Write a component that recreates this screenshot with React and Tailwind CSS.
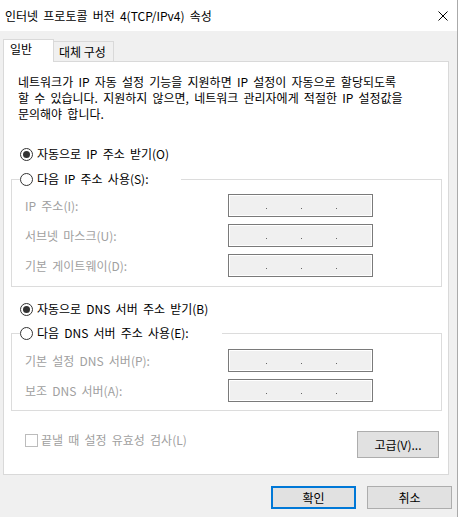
import React from "react";

function Radio({ checked }) {
  return (
    <span className="w-[13px] h-[13px] rounded-full border border-[#333333] bg-white flex items-center justify-center shrink-0">
      {checked && <span className="w-[7px] h-[7px] rounded-full bg-[#333333]" />}
    </span>
  );
}

function IpInput() {
  return (
    <div className="w-[145px] h-[23px] border border-[#7a7a7a] bg-[#f0f0f0] shadow-[inset_0_0_0_1px_#ffffff] flex items-end pb-[7px] pl-[37px] gap-[34px]">
      <span className="w-px h-px bg-[#666666]" />
      <span className="w-px h-px bg-[#666666]" />
      <span className="w-px h-px bg-[#666666]" />
    </div>
  );
}

function Row({ label }) {
  return (
    <div className="flex items-center h-[23px]">
      <span className="w-[203px] text-[#a0a0a0] leading-[16px] whitespace-nowrap">{label}</span>
      <IpInput />
    </div>
  );
}

export default function App() {
  return (
    <div className="w-[459px] h-[517px] bg-white font-['Noto_Sans_CJK_KR',sans-serif] text-[12px] text-black [word-spacing:2.5px]">
      <div className="w-[458px] h-[517px] bg-[#f0f0f0] border-r border-[#aaaaaa] flex flex-col">
        <div className="h-[31px] bg-white flex items-center justify-between pl-[5px] pr-[9px] shrink-0">
          <span className="leading-[16px] whitespace-nowrap">인터넷 프로토콜 버전 4(TCP/IPv4) 속성</span>
          <svg width="10" height="10" viewBox="0 0 10 10">
            <path d="M0.5 0.5L9.5 9.5M9.5 0.5L0.5 9.5" stroke="#000" strokeWidth="1" />
          </svg>
        </div>

        <div className="pl-[3px] pt-[8px]">
          <div className="flex items-end">
            <div className="relative z-10 -mb-px h-[23px] w-[51px] bg-white border border-b-0 border-[#d9d9d9] pl-[6px] pt-[1px] leading-[16px]">
              일반
            </div>
            <div className="h-[20px] w-[60px] border-t border-r border-[#d9d9d9] pl-[5px] pt-[2px] leading-[16px] whitespace-nowrap [word-spacing:0px]">
              대체 구성
            </div>
          </div>

          <div className="w-[446px] h-[414px] bg-white border border-[#d9d9d9] pt-[12px]">
            <p className="pl-[14px] leading-[16px] whitespace-nowrap">
              네트워크가 IP 자동 설정 기능을 지원하면 IP 설정이 자동으로 할당되도록
              <br />
              할 수 있습니다. 지원하지 않으면, 네트워크 관리자에게 적절한 IP 설정값을
              <br />
              문의해야 합니다.
            </p>

            <div className="pl-[7px]">
              <div className="mt-[24px] ml-[9px] flex items-center gap-[4px] h-[16px] leading-[16px]">
                <Radio checked />
                <span>자동으로 IP 주소 받기(O)</span>
              </div>

              <fieldset className="mt-[9px] w-[431px] border border-[#dcdcdc] pb-[9px]">
                <legend className="ml-[8px] w-[161px] bg-white">
                  <div className="flex items-center gap-[4px] h-[16px] leading-[16px]">
                    <Radio />
                    <span>다음 IP 주소 사용(S):</span>
                  </div>
                </legend>
                <div className="pt-[7px] pl-[13px] flex flex-col gap-[7px]">
                  <Row label="IP 주소(I):" />
                  <Row label="서브넷 마스크(U):" />
                  <Row label="기본 게이트웨이(D):" />
                </div>
              </fieldset>

              <div className="mt-[14px] ml-[9px] flex items-center gap-[4px] h-[16px] leading-[16px]">
                <Radio checked />
                <span>자동으로 DNS 서버 주소 받기(B)</span>
              </div>

              <fieldset className="mt-[8px] w-[431px] border border-[#dcdcdc] pb-[8px]">
                <legend className="ml-[8px] w-[202px] bg-white">
                  <div className="flex items-center gap-[4px] h-[16px] leading-[16px]">
                    <Radio />
                    <span>다음 DNS 서버 주소 사용(E):</span>
                  </div>
                </legend>
                <div className="pt-[8px] pl-[13px] flex flex-col gap-[7px]">
                  <Row label="기본 설정 DNS 서버(P):" />
                  <Row label="보조 DNS 서버(A):" />
                </div>
              </fieldset>

              <div className="mt-[20px] pl-[14px] pr-[9px] flex justify-between items-start">
                <div className="mt-[1px] h-[16px] flex items-center gap-[3px]">
                  <span className="w-[13px] h-[13px] border border-[#bcbcbc] bg-white shrink-0" />
                  <span className="text-[#a0a0a0] leading-[16px] whitespace-nowrap">끝낼 때 설정 유효성 검사(L)</span>
                </div>
                <button className="w-[82px] h-[27px] bg-[#e1e1e1] border border-[#adadad] flex items-center justify-center leading-[16px]">
                  고급(V)...
                </button>
              </div>
            </div>
          </div>
        </div>

        <div className="mt-[11px] pr-[5px] flex justify-end gap-[11px]">
          <button className="w-[85px] h-[23px] bg-[#e1e1e1] border-2 border-[#0078d7] flex items-center justify-center leading-[16px]">
            확인
          </button>
          <button className="w-[85px] h-[23px] bg-[#e1e1e1] border border-[#adadad] flex items-center justify-center leading-[16px]">
            취소
          </button>
        </div>
      </div>
    </div>
  );
}
